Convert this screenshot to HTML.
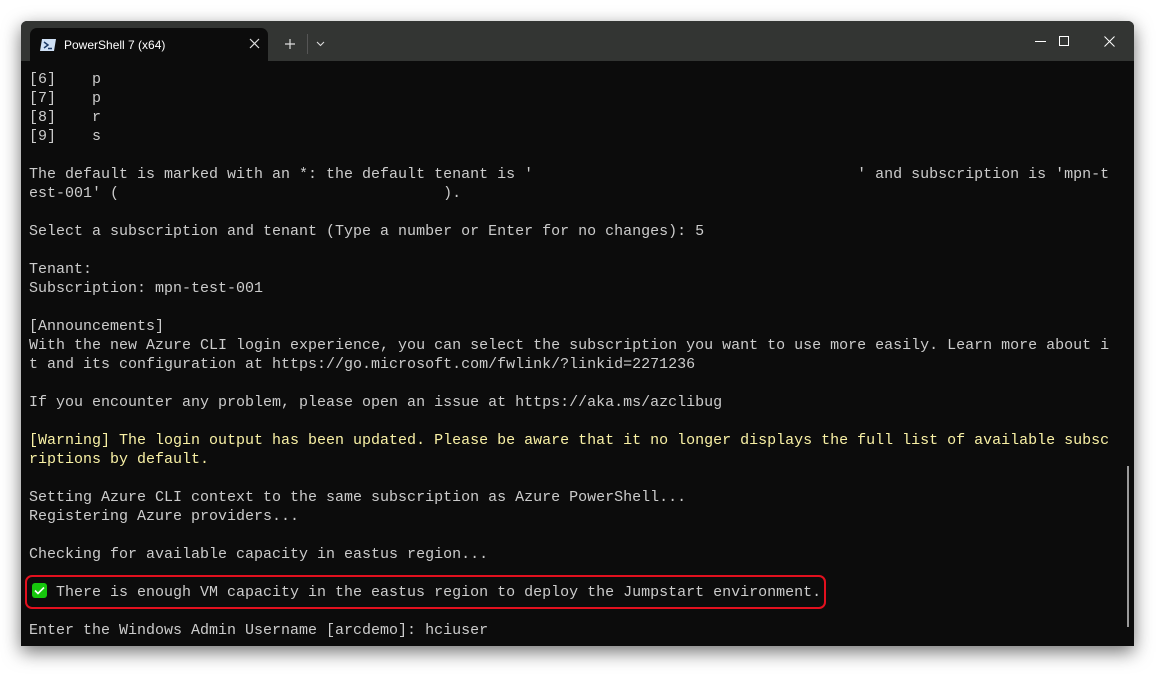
<!DOCTYPE html>
<html><head><meta charset="utf-8"><style>
body{margin:0;width:1176px;height:689px;background:#fff;position:relative;overflow:hidden}
.win{position:absolute;left:21px;top:21px;width:1113px;height:625px;background:#0c0c0c;box-shadow:0 6px 18px rgba(0,0,0,.55);border-radius:6px 6px 0 0;overflow:hidden}
.bar{position:absolute;left:0;top:0;width:100%;height:40px;background:#333533}
.tab{position:absolute;left:9px;top:7px;width:238px;height:33px;background:#0c0c0c;border-radius:7px 7px 0 0;font:12px "Liberation Sans",sans-serif;color:#fff}
.term{position:absolute;left:8px;top:49px;font:15px/19px "Liberation Mono",monospace;color:#cccccc;white-space:pre}
.y{color:#f9f1a5}
.box{position:absolute;left:4px;top:554px;width:797px;height:30px;border:2px solid #e3101e;border-radius:7px}
.chk{display:inline-block;width:15px;height:15px;margin-left:3px;background:#16c60c;border-radius:3px;vertical-align:-2px;position:relative}
</style></head><body>
<div class="win">
<div class="bar">
<div class="tab">
<svg style="position:absolute;left:10px;top:11px" width="16" height="12" viewBox="0 0 16 12"><path d="M2 0H16L14 12H0Z" fill="#cfe0f5"/><path d="M4 3L8 6L4 9" stroke="#1d3a66" stroke-width="1.5" fill="none"/><path d="M8 9.5H12" stroke="#1d3a66" stroke-width="1.5"/></svg>
<span style="position:absolute;left:34px;top:10px">PowerShell 7 (x64)</span>
<svg style="position:absolute;left:219px;top:10px" width="11" height="11"><path d="M1 1L10 10M10 1L1 10" stroke="#ddd" stroke-width="1.2"/></svg>
</div>
<svg style="position:absolute;left:263px;top:17px" width="12" height="12"><path d="M6 1V11M1 6H11" stroke="#ddd" stroke-width="1.2"/></svg>
<div style="position:absolute;left:286px;top:13px;width:1px;height:20px;background:#555"></div>
<svg style="position:absolute;left:295px;top:20px" width="9" height="6"><path d="M1 1L4.5 4.5L8 1" stroke="#ddd" stroke-width="1.1" fill="none"/></svg>
<div style="position:absolute;left:1014px;top:20px;width:11px;height:1px;background:#fff"></div>
<div style="position:absolute;left:1038px;top:15px;width:8px;height:8px;border:1px solid #fff"></div>
<svg style="position:absolute;left:1083px;top:15px" width="11" height="11"><path d="M0.5 0.5L10.5 10.5M10.5 0.5L0.5 10.5" stroke="#fff" stroke-width="1"/></svg>
</div>
<div class="box"></div>
<div class="term">[6]    p
[7]    p
[8]    r
[9]    s

The default is marked with an *: the default tenant is '                                    ' and subscription is 'mpn-t
est-001' (                                    ).

Select a subscription and tenant (Type a number or Enter for no changes): 5

Tenant:
Subscription: mpn-test-001

[Announcements]
With the new Azure CLI login experience, you can select the subscription you want to use more easily. Learn more about i
t and its configuration at https://go.microsoft.com/fwlink/?linkid=2271236

If you encounter any problem, please open an issue at https://aka.ms/azclibug

<span class="y">[Warning] The login output has been updated. Please be aware that it no longer displays the full list of available subsc
riptions by default.</span>

Setting Azure CLI context to the same subscription as Azure PowerShell...
Registering Azure providers...

Checking for available capacity in eastus region...

<span class="chk"><svg style="position:absolute;left:2px;top:3px" width="11" height="9"><path d="M1 4.5L4 7.5L10 1.5" stroke="#fff" stroke-width="1.6" fill="none"/></svg></span> There is enough VM capacity in the eastus region to deploy the Jumpstart environment.

Enter the Windows Admin Username [arcdemo]: hciuser</div>
<div style="position:absolute;left:1106px;top:445px;width:2px;height:161px;background:#9a9a9a"></div>
</div>
</body></html>
